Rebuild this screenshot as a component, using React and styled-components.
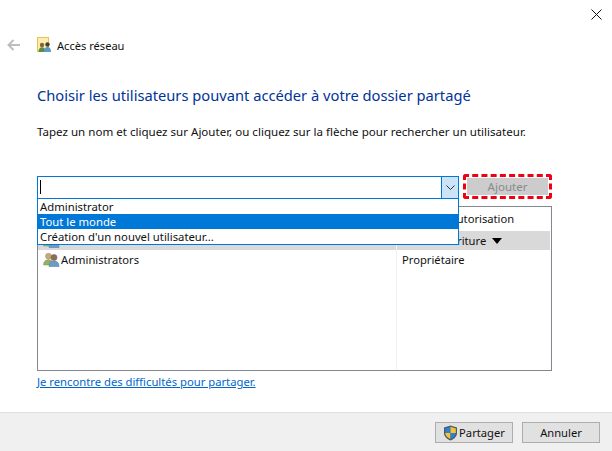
import styled, { createGlobalStyle } from "styled-components";

const GlobalStyle = createGlobalStyle`
  html, body {
    margin: 0;
    padding: 0;
    background: #fff;
  }
  * {
    box-sizing: border-box;
  }
`;

const options = ["Administrator", "Tout le monde", "Création d'un nouvel utilisateur..."];

function UsersIcon() {
  return (
    <svg width="17" height="15" viewBox="0 0 17 15">
      <circle cx="5.500" cy="4.200" r="3" fill="#c9a777" stroke="#a5a08c" strokeWidth="0.600" />
      <path d="M0.500 13c0-3.600 2-5.200 5-5.200s5 1.600 5 5.200z" fill="#8fb35f" stroke="#8d9c78" strokeWidth="0.600" />
      <circle cx="11" cy="5.500" r="3" fill="#8d6f52" stroke="#6d6660" strokeWidth="0.600" />
      <path d="M6 14.500c0-3.800 2-5.500 5-5.500s5 1.700 5 5.500z" fill="#6b9cc9" stroke="#5f7f9e" strokeWidth="0.600" />
    </svg>
  );
}

function ShareFolderIcon() {
  return (
    <svg width="16" height="16" viewBox="0 0 16 16">
      <rect x="0.500" y="0.500" width="11" height="14" fill="#fdeeb0" stroke="#e8c44f" />
      <circle cx="5" cy="8" r="2.200" fill="#8a6239" />
      <path d="M1.500 15c0-3.200 1.400-4.700 3.500-4.700s3.500 1.500 3.500 4.700z" fill="#5f8a44" />
      <circle cx="10.500" cy="7.500" r="2.200" fill="#4a3d33" />
      <path d="M7 15c0-3.400 1.400-5 3.500-5s3.500 1.600 3.500 5z" fill="#5b9ac9" />
    </svg>
  );
}

function ShieldIcon() {
  return (
    <svg width="15" height="16" viewBox="0 0 15 16">
      <path d="M7.500 0.500 14 2.500v5.500c0 3.500-3 6.300-6.500 7.500C4 14.300 1 11.500 1 8V2.500z" fill="#4a5a6a" />
      <path d="M7.500 1.800V8H2.200V3.400z" fill="#2f7fd6" />
      <path d="M7.500 1.800 12.800 3.400V8H7.500z" fill="#f6c42c" />
      <path d="M2.200 8h5.300v6.100C4.800 13 2.400 10.800 2.200 8z" fill="#f6c42c" />
      <path d="M7.500 8h5.300c-.2 2.800-2.600 5-5.300 6.100z" fill="#2f7fd6" />
    </svg>
  );
}

export default function App() {
  return (
    <Window>
      <GlobalStyle />
      <CloseButton aria-label="Fermer">
        <svg width="11" height="11" viewBox="0 0 11 11">
          <path d="M0.500 0.500 10.500 10.500M10.500 0.500 0.500 10.500" stroke="#111" strokeWidth="1" />
        </svg>
      </CloseButton>

      <NavRow>
        <BackArrow width="14" height="12" viewBox="0 0 14 12">
          <path d="M13 6H2M6.500 1 1.500 6l5 5" stroke="#bdbdbd" strokeWidth="2" fill="none" />
        </BackArrow>
        <ShareFolderIcon />
        <NavTitle>Accès réseau</NavTitle>
      </NavRow>

      <Content>
        <Heading>Choisir les utilisateurs pouvant accéder à votre dossier partagé</Heading>
        <Description>
          Tapez un nom et cliquez sur Ajouter, ou cliquez sur la flèche pour rechercher un utilisateur.
        </Description>

        <PickerRow>
          <ComboWrap>
            <Combo>
              <ComboInput>
                <Caret />
              </ComboInput>
              <ComboArrow>
                <svg width="9" height="5" viewBox="0 0 9 5">
                  <path d="M0.500 0.500 4.500 4.500l4-4" stroke="#333" strokeWidth="1" fill="none" />
                </svg>
              </ComboArrow>
            </Combo>
            <Dropdown>
              {options.map((option, index) => (
                <Option key={option} $selected={index === 1}>
                  {option}
                </Option>
              ))}
            </Dropdown>
          </ComboWrap>
          <AddOutline>
            <AddButton>Ajouter</AddButton>
          </AddOutline>
        </PickerRow>

        <Table>
          <NameColumn>
            <ColumnHeader />
            <GroupRow>
              <UsersIcon />
            </GroupRow>
            <NameRow>
              <UsersIcon />
              Administrators
            </NameRow>
          </NameColumn>
          <RightsColumn>
            <ColumnHeader>Niveau d'autorisation</ColumnHeader>
            <GroupRow>
              Lecture/écriture
              <DownTriangle />
            </GroupRow>
            <NameRow>Propriétaire</NameRow>
          </RightsColumn>
        </Table>

        <HelpLink href="#">Je rencontre des difficultés pour partager.</HelpLink>
      </Content>

      <Footer>
        <FooterButton>
          <ShieldIcon />
          Partager
        </FooterButton>
        <FooterButton>Annuler</FooterButton>
      </Footer>
    </Window>
  );
}

const Window = styled.div`
  position: relative;
  width: 612px;
  height: 451px;
  display: flex;
  flex-direction: column;
  background: #fff;
  overflow: hidden;
  font-family: "Noto Sans", "Open Sans", sans-serif;
  font-size: 11.2px;
  color: #111;
`;

const CloseButton = styled.div`
  position: absolute;
  top: 9px;
  right: 10px;
  width: 11px;
  height: 11px;
  display: flex;
`;

const NavRow = styled.div`
  height: 20px;
  margin-top: 35px;
  padding-left: 7px;
  display: flex;
  align-items: center;
`;

const BackArrow = styled.svg`
  margin-right: 16px;
`;

const NavTitle = styled.span`
  margin-left: 4px;
  font-size: 11.1px;
`;

const Content = styled.div`
  flex: 1;
  padding: 0 60px 0 37px;
  display: flex;
  flex-direction: column;
  align-items: flex-start;
`;

const Heading = styled.h1`
  margin: 29px 0 0;
  height: 22px;
  line-height: 22px;
  font-size: 14.7px;
  font-weight: 400;
  color: #003399;
  white-space: nowrap;
`;

const Description = styled.p`
  margin: 18px 0 0;
  height: 16px;
  line-height: 16px;
  font-size: 11.57px;
  white-space: nowrap;
`;

const PickerRow = styled.div`
  margin-top: 34px;
  display: flex;
  align-items: flex-start;
  gap: 4px;
`;

const ComboWrap = styled.div`
  position: relative;
  margin-top: 2px;
  width: 422px;
`;

const Combo = styled.div`
  height: 23px;
  display: flex;
  border: 1px solid #0078d7;
`;

const ComboInput = styled.div`
  flex: 1;
  padding: 3px 0 0 2px;
`;

const Caret = styled.div`
  width: 1px;
  height: 14px;
  background: #000;
`;

const ComboArrow = styled.div`
  width: 17px;
  display: flex;
  align-items: center;
  justify-content: center;
  background: #cce4f7;
  border-left: 1px solid #0078d7;
`;

const Dropdown = styled.div`
  position: absolute;
  top: 22px;
  left: 0;
  right: 0;
  z-index: 2;
  height: 47px;
  background: #fff;
  border: 1px solid #0078d7;
`;

const Option = styled.div`
  height: 15px;
  line-height: 15px;
  padding-left: 2px;
  font-size: 11.3px;
  white-space: nowrap;
  background: ${(props) => (props.$selected ? "#0078d7" : "transparent")};
  color: ${(props) => (props.$selected ? "#fff" : "#111")};
`;

const AddOutline = styled.div`
  width: 89px;
  height: 25px;
  padding: 1px;
  border: 3px dashed #f00014;
  border-radius: 3px;
  display: flex;
`;

const AddButton = styled.div`
  flex: 1;
  display: flex;
  align-items: center;
  justify-content: center;
  background: #cccccc;
  color: #8a8a8a;
  font-size: 11.5px;
`;

const Table = styled.div`
  margin-top: 7px;
  width: 515px;
  height: 165px;
  display: grid;
  grid-template-columns: 358px 1fr;
  border: 1px solid #828790;
  font-size: 11.2px;
`;

const NameColumn = styled.div`
  display: flex;
  flex-direction: column;
`;

const RightsColumn = styled.div`
  display: flex;
  flex-direction: column;
  border-left: 1px solid #eef0f4;
  padding-right: 1px;
`;

const ColumnHeader = styled.div`
  height: 24px;
  line-height: 23px;
  padding-left: 5px;
  white-space: nowrap;
`;

const GroupRow = styled.div`
  height: 19px;
  display: flex;
  align-items: center;
  gap: 2px;
  padding-left: 5px;
  background: #d9d9d9;
  white-space: nowrap;
`;

const NameRow = styled.div`
  height: 19px;
  display: flex;
  align-items: center;
  gap: 1px;
  padding-left: 5px;
  white-space: nowrap;
`;

const DownTriangle = styled.span`
  margin-left: 4px;
  width: 0;
  height: 0;
  border-left: 5px solid transparent;
  border-right: 5px solid transparent;
  border-top: 6px solid #000;
`;

const HelpLink = styled.a`
  margin-top: 3px;
  height: 16px;
  line-height: 16px;
  font-size: 11.25px;
  color: #0066cc;
  text-decoration: underline;
`;

const Footer = styled.div`
  height: 39px;
  display: flex;
  justify-content: flex-end;
  align-items: flex-start;
  gap: 9px;
  padding: 9px 12px 0 0;
  background: #f0f0f0;
  border-top: 1px solid #dfdfdf;
`;

const FooterButton = styled.div`
  width: 78px;
  height: 21px;
  display: flex;
  align-items: center;
  justify-content: center;
  gap: 1px;
  background: #e1e1e1;
  border: 1px solid #adadad;
  font-size: 11.2px;
`;
